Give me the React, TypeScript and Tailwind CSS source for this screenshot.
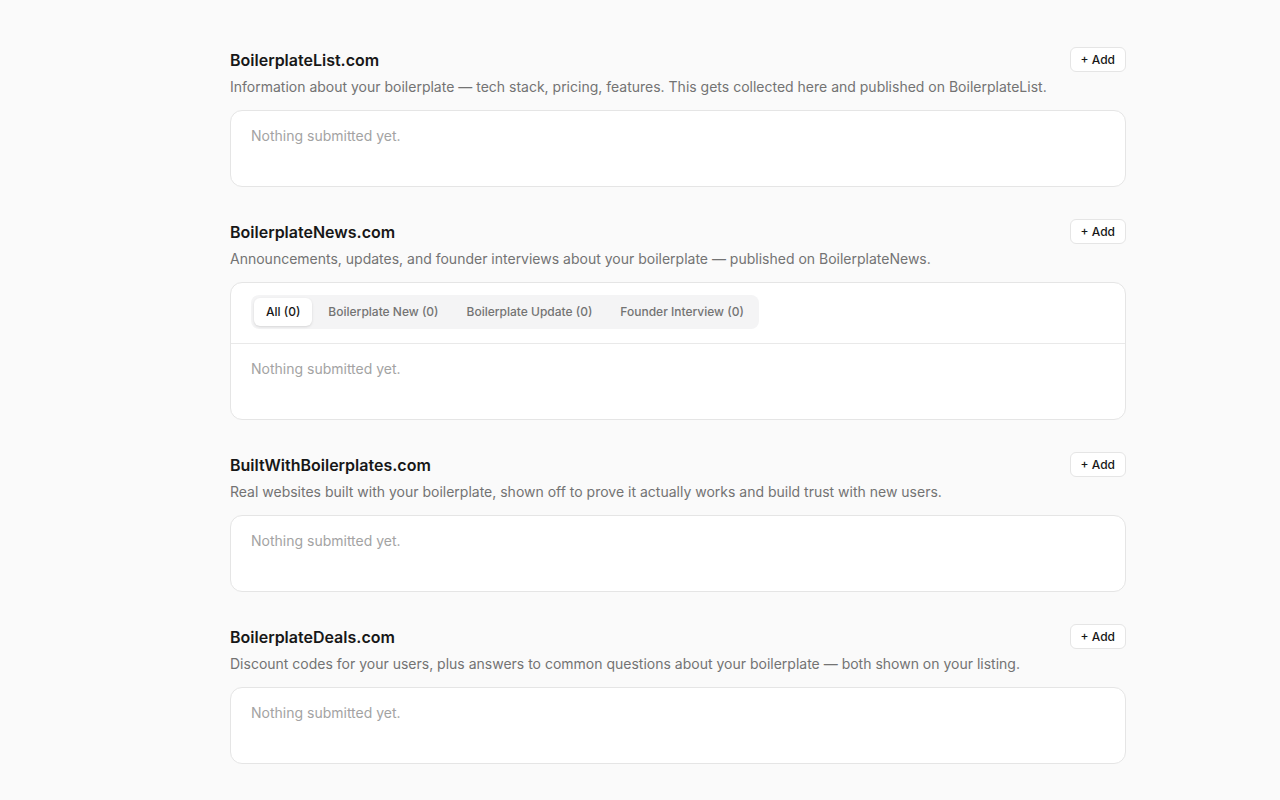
import { useState } from 'react';

const sections = [
  {
    title: 'BoilerplateList.com',
    desc: 'Information about your boilerplate — tech stack, pricing, features. This gets collected here and published on BoilerplateList.',
  },
  {
    title: 'BoilerplateNews.com',
    desc: 'Announcements, updates, and founder interviews about your boilerplate — published on BoilerplateNews.',
    tabs: ['All (0)', 'Boilerplate New (0)', 'Boilerplate Update (0)', 'Founder Interview (0)'],
  },
  {
    title: 'BuiltWithBoilerplates.com',
    desc: 'Real websites built with your boilerplate, shown off to prove it actually works and build trust with new users.',
  },
  {
    title: 'BoilerplateDeals.com',
    desc: 'Discount codes for your users, plus answers to common questions about your boilerplate — both shown on your listing.',
  },
];

function Empty() {
  return (
    <div className="h-[75px] px-5 pt-[15px] text-sm leading-5 text-[#a3a3a3]">Nothing submitted yet.</div>
  );
}

function Tabs({ tabs }: { tabs: string[] }) {
  const [active, setActive] = useState(0);
  return (
    <div className="border-b border-[#e9e9e9] px-5 pt-3 pb-[14px]">
      <div className="inline-flex items-center gap-1 rounded-lg bg-[#f4f4f5] p-[3px]">
        {tabs.map((t, i) => (
          <button
            key={t}
            onClick={() => setActive(i)}
            className={
              i === active
                ? 'h-7 rounded-md bg-white px-3 text-xs font-medium text-[#171717] shadow-sm'
                : 'h-7 rounded-md px-3 text-xs font-medium text-[#737373]'
            }
          >
            {t}
          </button>
        ))}
      </div>
    </div>
  );
}

export default function App() {
  return (
    <div className="min-h-screen bg-[#fafafa] pl-[76px] text-[#171717]" style={{ fontFamily: 'Inter, "Noto Sans", sans-serif' }}>
      <div className="mx-auto max-w-4xl pt-[47px] pb-10">
        <div className="flex flex-col gap-8">
          {sections.map((s) => (
            <section key={s.title}>
              <div className="flex items-center justify-between">
                <h2 className="text-base leading-6 font-semibold text-[#171717]">{s.title}</h2>
                <button className="h-[25px] rounded-md border border-[#e5e5e5] bg-white px-[10px] text-xs font-medium text-[#171717]">
                  + Add
                </button>
              </div>
              <p className="mt-[5px] text-sm leading-5 text-[#737373]">{s.desc}</p>
              <div className="mt-[13px] rounded-xl border border-[#e5e5e5] bg-white">
                {s.tabs && <Tabs tabs={s.tabs} />}
                <Empty />
              </div>
            </section>
          ))}
        </div>
      </div>
    </div>
  );
}
